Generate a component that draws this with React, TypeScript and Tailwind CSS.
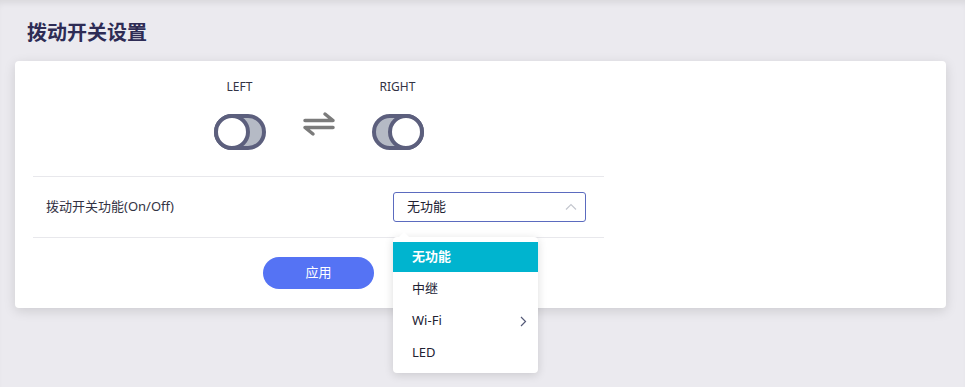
import React from "react";

const font = { fontFamily: '"Noto Sans", "Noto Sans CJK SC", sans-serif' };

function Toggle({ on }: { on: boolean }) {
  return (
    <svg width="54" height="38" viewBox="0 0 54 38">
      <rect x="3" y="3" width="48" height="32" rx="16" fill="#b5bac5" stroke="#5c5f7d" strokeWidth="4" />
      <circle cx={on ? 35 : 19} cy="19" r="16" fill="#ffffff" stroke="#5c5f7d" strokeWidth="4" />
    </svg>
  );
}

function SwapIcon() {
  return (
    <svg width="34" height="26" viewBox="0 0 34 26" fill="none" stroke="#7b7b7b" strokeWidth="3.5" strokeLinecap="round" strokeLinejoin="round">
      <path d="M3 9.5 H31 L23 3" />
      <path d="M31 16.5 H3 L11 23" />
    </svg>
  );
}

export default function App() {
  return (
    <div
      className="relative w-[965px] h-[387px] bg-[#ebeaef] overflow-hidden shadow-[inset_0_6px_6px_-3px_rgba(0,0,0,0.08)]"
      style={font}
    >
      <div className="pl-[27px] pt-[19px] h-[61px]">
        <h1 className="text-[20px] leading-[28px] font-bold text-[#2e2c55]">拨动开关设置</h1>
      </div>
      <div className="ml-[15px] w-[931px] bg-white rounded-[4px] shadow-[0_3px_12px_rgba(0,0,0,0.13)] pl-[18px] pb-[19px]">
        <div className="w-[571px]">
          <div className="h-[116px] flex justify-center pt-[17px] border-b border-[#e8e8ec]">
            <div className="w-[79px] flex flex-col items-center">
              <span className="text-[12px] leading-[18px] text-[#333344]">LEFT</span>
              <div className="mt-[17px]">
                <Toggle on={false} />
              </div>
            </div>
            <div className="w-[79px] flex justify-center pt-[33px]">
              <SwapIcon />
            </div>
            <div className="w-[79px] flex flex-col items-center">
              <span className="text-[12px] leading-[18px] text-[#333344]">RIGHT</span>
              <div className="mt-[17px]">
                <Toggle on={true} />
              </div>
            </div>
          </div>
          <div className="h-[61px] flex items-center pl-[13px] border-b border-[#e8e8ec]">
            <span className="w-[347px] text-[13px] text-[#333344]">拨动开关功能(On/Off)</span>
            <div className="w-[193px] h-[30px] border border-[#5b6bbf] rounded-[3px] flex items-center justify-between pl-[13px] pr-[8px]">
              <span className="text-[13px] text-[#222233]">无功能</span>
              <svg width="12" height="8" viewBox="0 0 12 8" fill="none" stroke="#c4c7cf" strokeWidth="1.2">
                <path d="M1 6.5 L6 1.5 L11 6.5" />
              </svg>
            </div>
          </div>
          <div className="flex justify-center pt-[19px]">
            <button className="w-[111px] h-[32px] rounded-full bg-[#5573f4] text-white text-[13px]">应用</button>
          </div>
        </div>
      </div>

      <div className="absolute left-[393px] top-[237px] w-[145px] bg-white rounded-[4px] shadow-[0_2px_10px_rgba(0,0,0,0.14)] pt-[5px] pb-[4px]">
        <div className="absolute left-[5px] -top-[5px] w-0 h-0 border-l-[6px] border-r-[6px] border-b-[6px] border-l-transparent border-r-transparent border-b-white" />
        <div className="h-[30px] bg-[#00b4cf] flex items-center pl-[19px] text-[13px] font-bold text-white">无功能</div>
        <div className="h-[32px] flex items-center pl-[19px] text-[13px] text-[#222233] mt-[1px]">中继</div>
        <div className="h-[32px] flex items-center justify-between pl-[19px] pr-[11px] text-[13px] text-[#222233]">
          <span>Wi-Fi</span>
          <svg width="7" height="11" viewBox="0 0 7 11" fill="none" stroke="#555a78" strokeWidth="1.2">
            <path d="M1 1 L5.5 5.5 L1 10" />
          </svg>
        </div>
        <div className="h-[32px] flex items-center pl-[19px] text-[13px] text-[#222233]">LED</div>
      </div>
    </div>
  );
}
